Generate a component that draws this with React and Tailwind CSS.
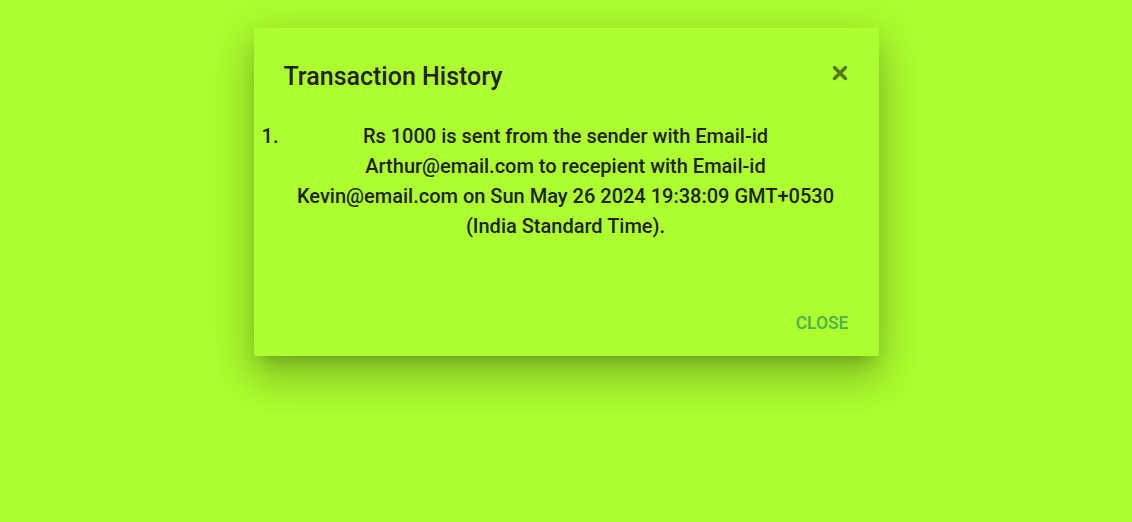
export default function App() {
    return (
        <div className="min-h-[522px] w-full bg-[#adff2f] pt-[28px]" style={{ fontFamily: "Roboto, 'Liberation Sans', sans-serif" }}>
            <div className="mx-auto w-[625px] h-[328px] bg-[#adff2f] rounded-[2px] shadow-[0_11px_15px_-7px_rgba(0,0,0,0.2),0_24px_38px_3px_rgba(0,0,0,0.14),0_9px_46px_8px_rgba(0,0,0,0.12)] flex flex-col">
                <div className="flex items-center justify-between pl-[30px] pr-[31px] pt-[32px]">
                    <h2 className="text-[25px] leading-[34px] font-medium text-[#222]">Transaction History</h2>
                    <button className="text-[#4f7a1a] -mt-[8px]">
                        <svg width="16" height="16" viewBox="0 0 16 16" fill="none" stroke="currentColor" strokeWidth="3.4" strokeLinecap="round">
                            <path d="M2.5 2.5 13.5 13.5M13.5 2.5 2.5 13.5" />
                        </svg>
                    </button>
                </div>
                <ol className="list-decimal pl-[30px] pr-[31px] mt-[27px] text-[20px] leading-[30px] font-medium text-[#222]">
                    <li className="text-center">
                        Rs 1000 is sent from the sender with Email-id Arthur@email.com to recepient with Email-id Kevin@email.com on Sun May 26 2024 19:38:09 GMT+0530 (India Standard Time).
                    </li>
                </ol>
                <div className="mt-auto flex justify-end pr-[30px] pb-[23px]">
                    <button className="text-[17.5px] font-medium uppercase text-[#4caf50] leading-[20px]">Close</button>
                </div>
            </div>
        </div>
    );
}
